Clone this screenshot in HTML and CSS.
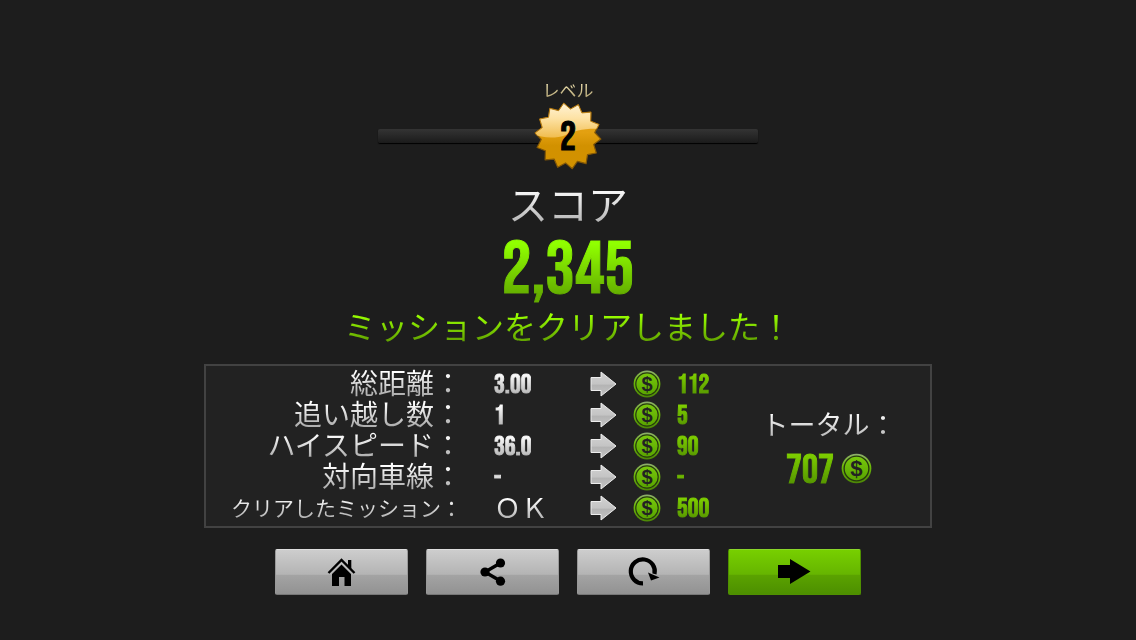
FILE: index.html
```
<!DOCTYPE html>
<html lang="ja">
<head>
    <meta charset="UTF-8">
    <meta name="viewport" content="width=device-width, initial-scale=1.0">
    <title>スコア</title>
    <link rel="stylesheet" href="styles.css">
</head>
<body>
    <!-- shared icons -->
    <svg class="defs" width="0" height="0" aria-hidden="true">
        <defs>
            <linearGradient id="gold" x1="0" y1="0" x2="0" y2="1">
                <stop offset="0" stop-color="#e9a71c"/>
                <stop offset="0.45" stop-color="#e3a010"/>
                <stop offset="0.65" stop-color="#d29100"/>
                <stop offset="1" stop-color="#d29200"/>
            </linearGradient>
            <linearGradient id="gloss" x1="0" y1="0" x2="0" y2="1">
                <stop offset="0" stop-color="#fff3d6"/>
                <stop offset="0.4" stop-color="#fde2a4"/>
                <stop offset="1" stop-color="#eeb640"/>
            </linearGradient>
            <linearGradient id="silver" x1="0" y1="0" x2="0" y2="1">
                <stop offset="0" stop-color="#d2d2d2"/>
                <stop offset="0.5" stop-color="#c4c4c4"/>
                <stop offset="0.55" stop-color="#b4b4b4"/>
                <stop offset="1" stop-color="#c4c4c4"/>
            </linearGradient>
            <linearGradient id="green" x1="0" y1="0" x2="0" y2="1">
                <stop offset="0" stop-color="#79c90c"/>
                <stop offset="1" stop-color="#58a300"/>
            </linearGradient>
            <linearGradient id="rim" x1="0" y1="0" x2="0" y2="1">
                <stop offset="0" stop-color="#8fae70"/>
                <stop offset="0.4" stop-color="#6fbd0a"/>
                <stop offset="1" stop-color="#4c8606"/>
            </linearGradient>
            <clipPath id="star-top">
                <path d="M0 0H70V28C50 27 42 30 33 34C22 38 9 37 0 33Z"/>
            </clipPath>
            <symbol id="coin" viewBox="0 0 28 28">
                <circle cx="14" cy="14" r="13.4" fill="url(#rim)"/>
                <circle cx="14" cy="14" r="11.2" fill="url(#green)" stroke="#26380f" stroke-width="1.2"/>
                <text class="coin-sign" x="14" y="21" text-anchor="middle">$</text>
            </symbol>
            <symbol id="arrow" viewBox="0 0 28 28">
                <path d="M2 7.5H12V2L27 14L12 26V20.5H2Z" fill="url(#silver)" stroke="#ededed" stroke-width="1"/>
            </symbol>
        </defs>
    </svg>

    <main class="result">
        <section class="level">
            <p class="level-label">レベル</p>
            <div class="level-row">
                <div class="level-bar"></div>
                <div class="badge">
                    <svg class="badge-star" viewBox="0 0 70 70" aria-hidden="true">
                        <polygon fill="url(#gold)" stroke="#845806" stroke-width="1.2" stroke-linejoin="round" points="30.7,2.3 37.5,8.1 45.3,3.7 48.9,11.9 57.9,11.2 57.6,20.2 65.9,23.5 61.8,31.5 67.9,38.1 60.7,43.4 63.3,52 54.5,53.7 53.1,62.6 44.4,60.3 39.3,67.7 32.5,61.9 24.7,66.3 21.1,58.1 12.1,58.8 12.4,49.8 4.1,46.5 8.2,38.5 2.1,31.9 9.3,26.6 6.7,18 15.5,16.3 16.9,7.4 25.6,9.7"/>
                        <g clip-path="url(#star-top)">
                            <polygon fill="url(#gloss)" stroke="#b57b14" stroke-width="1" stroke-linejoin="round" points="30.7,2.3 37.5,8.1 45.3,3.7 48.9,11.9 57.9,11.2 57.6,20.2 65.9,23.5 61.8,31.5 60,40 8,40 2.1,31.9 9.3,26.6 6.7,18 15.5,16.3 16.9,7.4 25.6,9.7"/>
                        </g>
                    </svg>
                    <span class="badge-number">2</span>
                </div>
            </div>
        </section>

        <h1 class="title">スコア</h1>
        <p class="score">2,345</p>
        <p class="message">ミッションをクリアしました！</p>

        <section class="panel">
            <table class="breakdown">
                <tr>
                    <th scope="row">総距離：</th>
                    <td class="value"><span>3.00</span></td>
                    <td class="icon"><svg><use href="#arrow"/></svg></td>
                    <td class="icon"><svg><use href="#coin"/></svg></td>
                    <td class="amount"><span>112</span></td>
                </tr>
                <tr>
                    <th scope="row">追い越し数：</th>
                    <td class="value"><span>1</span></td>
                    <td class="icon"><svg><use href="#arrow"/></svg></td>
                    <td class="icon"><svg><use href="#coin"/></svg></td>
                    <td class="amount"><span>5</span></td>
                </tr>
                <tr>
                    <th scope="row">ハイスピード：</th>
                    <td class="value"><span>36.0</span></td>
                    <td class="icon"><svg><use href="#arrow"/></svg></td>
                    <td class="icon"><svg><use href="#coin"/></svg></td>
                    <td class="amount"><span>90</span></td>
                </tr>
                <tr>
                    <th scope="row">対向車線：</th>
                    <td class="value"><span>-</span></td>
                    <td class="icon"><svg><use href="#arrow"/></svg></td>
                    <td class="icon"><svg><use href="#coin"/></svg></td>
                    <td class="amount"><span>-</span></td>
                </tr>
                <tr>
                    <th scope="row" class="small">クリアしたミッション：</th>
                    <td class="value wide"><span>ＯＫ</span></td>
                    <td class="icon"><svg><use href="#arrow"/></svg></td>
                    <td class="icon"><svg><use href="#coin"/></svg></td>
                    <td class="amount"><span>500</span></td>
                </tr>
            </table>
            <div class="total">
                <p class="total-label">トータル：</p>
                <p class="total-value"><span>707</span><svg><use href="#coin"/></svg></p>
            </div>
        </section>

        <nav class="buttons">
            <button type="button" class="btn" aria-label="ホーム">
                <svg viewBox="0 0 32 32">
                    <path d="M2.5 17L15.5 4L28.5 17" fill="none" stroke="#000" stroke-width="2.4"/>
                    <path d="M22 4H25.3V13L22 9.7Z"/>
                    <path d="M15.5 8.5L25 18V30H18.5V21H13V30H6V18Z"/>
                </svg>
            </button>
            <button type="button" class="btn" aria-label="共有">
                <svg viewBox="0 0 32 32">
                    <path d="M23.5 7L8 16L23.5 25" fill="none" stroke="#000" stroke-width="3.4"/>
                    <circle cx="23.5" cy="7" r="4.6"/>
                    <circle cx="8" cy="16" r="4.6"/>
                    <circle cx="23.5" cy="25.2" r="4.6"/>
                </svg>
            </button>
            <button type="button" class="btn" aria-label="リトライ">
                <svg viewBox="0 0 32 32">
                    <path d="M15 27.4A12 12 0 1 1 26.5 18" fill="none" stroke="#000" stroke-width="4.2"/>
                    <path d="M20 16.5L31.500 21.5L23 24.5Z"/>
                </svg>
            </button>
            <button type="button" class="btn btn-next" aria-label="次へ">
                <svg viewBox="0 0 32 32">
                    <path d="M-1 9H11V3L31.5 15.5L11 28V22H-1Z"/>
                </svg>
            </button>
        </nav>
    </main>
</body>
</html>
```
FILE: styles.css
```
body {
    margin: 0;
    min-height: 100vh;
    background-color: #1d1d1d;
    color: #ddd;
    font-family: "Liberation Sans", "Noto Sans CJK JP", sans-serif;
    font-weight: 400;
}

h1,
p {
    margin: 0;
    font-weight: 400;
}

svg {
    display: block;
    overflow: visible;
}

.defs {
    position: absolute;
}

.result {
    display: flex;
    flex-direction: column;
    align-items: center;
    padding: 80px 16px 0;
}

/* gradient filled text */
.level-label,
.title,
.score,
.message,
.breakdown th,
.value span,
.amount span,
.total-label,
.total-value span {
    color: transparent;
    background-image: linear-gradient(#fff 15%, #b0b0b0 85%);
    -webkit-background-clip: text;
    background-clip: text;
}

.score,
.badge-number,
.value,
.amount,
.total-value {
    font-family: "Bebas Neue", "Roboto Condensed", "Liberation Sans Narrow", sans-serif;
    -webkit-text-stroke: 1px transparent;
}

/* level */
.level {
    width: 100%;
    max-width: 380px;
}

.level-label {
    padding-top: 3px;
    font-size: 17px;
    line-height: 18px;
    text-align: center;
    background-image: linear-gradient(#fff3c0, #a89868);
}

.level-row {
    display: grid;
    align-items: center;
    justify-items: center;
}

.level-row > * {
    grid-area: 1 / 1;
}

.level-bar {
    width: 100%;
    height: 14px;
    border-radius: 2px;
    background: linear-gradient(#343434, #1b1b1b);
    box-shadow: 0 1px 1px #000;
}

.badge {
    display: grid;
    place-items: center;
}

.badge > * {
    grid-area: 1 / 1;
}

.badge-star {
    width: 70px;
    height: 70px;
}

.badge-number {
    padding-top: 4px;
    color: #000;
    font-size: 40px;
    line-height: 40px;
    -webkit-text-stroke: 1px #000;
}

/* score */
.title {
    margin-top: 8px;
    font-size: 40px;
    line-height: 54px;
}

.score {
    padding-top: 2px;
    font-size: 74px;
    line-height: 72px;
    background-image: linear-gradient(#90ff00 15%, #63ac00 85%);
}

.message {
    font-size: 32px;
    line-height: 42px;
    background-image: linear-gradient(#98ff00 20%, #63a500 80%);
}

/* breakdown */
.panel {
    display: flex;
    align-items: center;
    box-sizing: border-box;
    width: 100%;
    max-width: 728px;
    margin-top: 15px;
    padding: 2px 0 3px;
    border: 2px solid #424242;
    background-color: #222;
}

.breakdown {
    flex: 3;
    border-collapse: collapse;
    line-height: 31px;
}

.breakdown th,
.breakdown td {
    height: 31px;
    padding: 0;
    white-space: nowrap;
}

.breakdown th {
    height: 29px;
    width: 256px;
    padding-top: 2px;
    font-size: 28px;
    font-weight: 400;
    line-height: 29px;
    text-align: right;
}

.breakdown .small {
    font-size: 21px;
}

.breakdown .value,
.breakdown .amount {
    height: 27px;
    padding-top: 4px;
    font-size: 27px;
    line-height: 27px;
}

.breakdown .value {
    width: 95px;
    padding-left: 32px;
}

.breakdown .wide {
    font-family: "Liberation Sans", "Noto Sans CJK JP", sans-serif;
    -webkit-text-stroke: 0;
}

.icon {
    width: 44px;
}

.icon svg {
    width: 28px;
    height: 28px;
}

.amount span,
.total-value span {
    background-image: linear-gradient(#7fd000 15%, #549400 85%);
}

.coin-sign {
    fill: #222;
    font-family: "Liberation Sans", sans-serif;
    font-size: 20px;
    font-weight: 700;
}

.total {
    flex: 1;
    display: flex;
    flex-direction: column;
    align-items: center;
    padding: 6px 12px 0 0;
}

.total-label {
    font-size: 27px;
    line-height: 40px;
}

.total-value {
    display: flex;
    align-items: center;
    gap: 7px;
    font-size: 40px;
    line-height: 42px;
}

.total-value span {
    padding-top: 4px;
}

.total-value svg {
    width: 31px;
    height: 31px;
}

/* buttons */
.buttons {
    display: flex;
    flex-wrap: wrap;
    justify-content: center;
    gap: 18px;
    margin-top: 21px;
}

.btn {
    display: flex;
    align-items: center;
    justify-content: center;
    width: 133px;
    height: 46px;
    padding: 0;
    border: 1px solid #999;
    border-top-color: #ddd;
    border-bottom-color: #777;
    border-radius: 2px;
    background: linear-gradient(#cdcdcd, #b4b4b4 55%, #a3a3a3 58%, #929292);
    cursor: pointer;
}

.btn svg {
    width: 32px;
    height: 32px;
}

.btn-next {
    border-color: #4f9000;
    border-top-color: #8ad62a;
    background: linear-gradient(#77cf00, #66b500 55%, #5aa200 58%, #4d8f00);
}
```
